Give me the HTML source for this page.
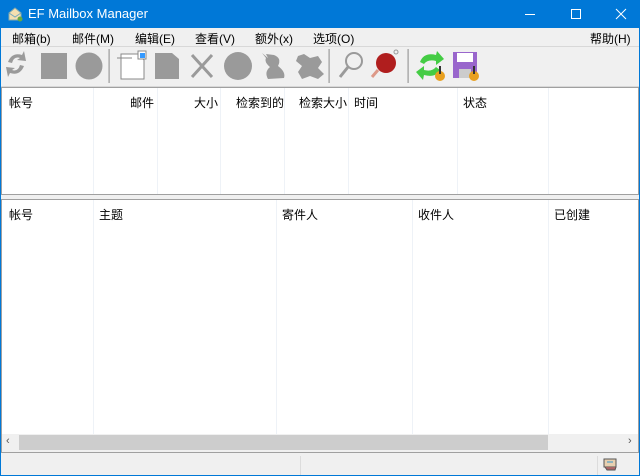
<!DOCTYPE html>
<html><head><meta charset="utf-8"><style>
*{margin:0;padding:0;box-sizing:border-box}
body{width:640px;height:476px;overflow:hidden;background:#f0f0f0;font-family:"Liberation Sans","Noto Sans CJK SC",sans-serif;font-size:12px;color:#000;position:relative}
.abs{position:absolute}
#title{left:0;top:0;width:640px;height:28px;background:#0078d7;color:#fff;font-size:13px}
#frame{left:0;top:0;width:640px;height:476px;border:1px solid #0078d7;border-top:none;pointer-events:none}
.menu span{position:absolute;top:30px;font-size:12px}
.box{background:#fff;border:1px solid #a0a0a0}
.hd{position:absolute;top:6px;font-size:12px}
.col{position:absolute;top:0;bottom:0;width:1px;background:#eef2f7}
</style></head><body>
<div id="title" class="abs">
<svg class="abs" style="left:7px;top:6px" width="16" height="16"><path d="M2 7 L8 2 L14 7 L14 14 L2 14Z" fill="#f4e0b0" stroke="#8aa" /><path d="M2 7 L8 11 L14 7" fill="none" stroke="#7ab"/><circle cx="13" cy="13" r="2.5" fill="#6a4"/></svg>
<span class="abs" style="left:28px;top:6px">EF Mailbox Manager</span>
<svg class="abs" style="left:520px;top:8px" width="110" height="12"><path d="M5 6.5h10" stroke="#fff"/><rect x="51.5" y="1.5" width="9" height="9" fill="none" stroke="#fff"/><path d="M96 1l10 10M106 1l-10 10" stroke="#fff"/></svg>
</div>
<div class="menu">
<span style="left:12px">邮箱(b)</span><span style="left:72px">邮件(M)</span><span style="left:135px">编辑(E)</span><span style="left:195px">查看(V)</span><span style="left:255px">额外(x)</span><span style="left:313px">选项(O)</span><span style="left:590px">帮助(H)</span>
</div>
<div class="abs" style="left:1px;top:46px;width:638px;height:1px;background:#d8d8d8"></div>
<svg class="abs" style="left:0;top:46px" width="500" height="40">
<g fill="#9a9a9a">
<path d="M8 16 Q12 6 22 9 L24 5 L26 15 L17 14 L20 12 Q14 10 12 17Z M24 20 Q20 30 10 27 L8 31 L6 21 L15 22 L12 24 Q18 26 20 19Z"/>
<rect x="41" y="7" width="26" height="26"/>
<circle cx="89" cy="20" r="13.5"/>
<rect x="108.5" y="3" width="1.2" height="34"/>
<path d="M155 7 H172 L179 13 V33 H155Z"/>
<path d="M192 9 L212 31 M212 9 L192 31" stroke="#9a9a9a" stroke-width="3"/>
<circle cx="238" cy="20" r="14"/>
<path d="M262 7 L268 12 L266 8 L274 9 Q282 12 278 20 Q286 26 284 32 L268 33 Q264 26 270 21 Q264 16 266 12Z"/>
<path d="M298 10 L304 8 L310 12 L318 10 L322 16 L318 22 L324 28 L318 33 L310 30 L302 33 L298 26 L302 20 L296 15Z"/>
<rect x="328.5" y="3" width="1.2" height="34"/>
<circle cx="354" cy="15" r="8" fill="none" stroke="#9a9a9a" stroke-width="2"/><path d="M348 21 L340 31" stroke="#9a9a9a" stroke-width="3"/>
<rect x="407.5" y="3" width="1.2" height="34"/>
</g>
<path d="M121 8 H138 L144 14 V33 H121Z" fill="#fff" stroke="#888"/><path d="M117 12 H132" stroke="#888"/><rect x="138" y="5" width="8" height="8" fill="#fff" stroke="#888"/><rect x="140" y="7" width="5" height="5" fill="#39f"/>
<circle cx="386" cy="17" r="10" fill="#b01e1e"/><path d="M378 24 L372 31" stroke="#d98" stroke-width="3"/><circle cx="396" cy="6" r="2" fill="none" stroke="#999"/>
<path d="M420 16 Q424 6 436 9 L437 5 L444 13 L436 19 L436 15 Q428 13 424 18Z M440 24 Q436 32 424 29 L423 34 L416 26 L424 20 L424 24 Q432 26 436 21Z" fill="#4c4"/>
<circle cx="440" cy="30" r="5" fill="#e8a020"/><rect x="439" y="20" width="2" height="8" fill="#333"/>
<rect x="453" y="6" width="24" height="26" fill="#9966cc"/><rect x="457" y="7" width="16" height="9" fill="#fff"/><rect x="459" y="23" width="12" height="9" fill="#ccc"/>
<circle cx="474" cy="30" r="5" fill="#e8a020"/><rect x="473" y="20" width="2" height="8" fill="#333"/>
</svg>
<div class="abs" style="left:1px;top:86px;width:638px;height:1px;background:#d8d8d8"></div>
<div class="abs box" style="left:1px;top:87px;width:638px;height:108px">
<div class="col" style="left:91px"></div><div class="col" style="left:155px"></div><div class="col" style="left:218px"></div><div class="col" style="left:282px"></div><div class="col" style="left:346px"></div><div class="col" style="left:455px"></div><div class="col" style="left:546px"></div>
<span class="hd" style="left:7px">帐号</span><span class="hd" style="left:128px">邮件</span><span class="hd" style="left:192px">大小</span><span class="hd" style="left:234px">检索到的</span><span class="hd" style="left:297px">检索大小</span><span class="hd" style="left:352px">时间</span><span class="hd" style="left:461px">状态</span>
</div>
<div class="abs box" style="left:1px;top:199px;width:638px;height:254px">
<div class="col" style="left:91px"></div><div class="col" style="left:274px"></div><div class="col" style="left:410px"></div><div class="col" style="left:546px"></div>
<span class="hd" style="left:7px">帐号</span><span class="hd" style="left:97px">主题</span><span class="hd" style="left:280px">寄件人</span><span class="hd" style="left:416px">收件人</span><span class="hd" style="left:552px">已创建</span>
<div class="abs" style="left:0;top:234px;width:636px;height:18px;background:#f0f0f0"></div>
<div class="abs" style="left:17px;top:235px;width:529px;height:15px;background:#cdcdcd"></div>
<span class="abs" style="left:4px;top:235px;font-size:11px;color:#555">&#8249;</span>
<span class="abs" style="left:626px;top:235px;font-size:11px;color:#555">&#8250;</span>
</div>
<div class="abs" style="left:300px;top:456px;width:1px;height:19px;background:#dcdcdc"></div>
<div class="abs" style="left:597px;top:456px;width:1px;height:19px;background:#dcdcdc"></div>
<svg class="abs" style="left:602px;top:456px" width="16" height="16"><rect x="2" y="3" width="12" height="8" fill="#e8d0b0" stroke="#555"/><path d="M3 11 L5 14 H13 L14 11" fill="#a66" stroke="#555"/><path d="M5 6h6" stroke="#39c"/></svg>
<div id="frame" class="abs"></div>
</body></html>
